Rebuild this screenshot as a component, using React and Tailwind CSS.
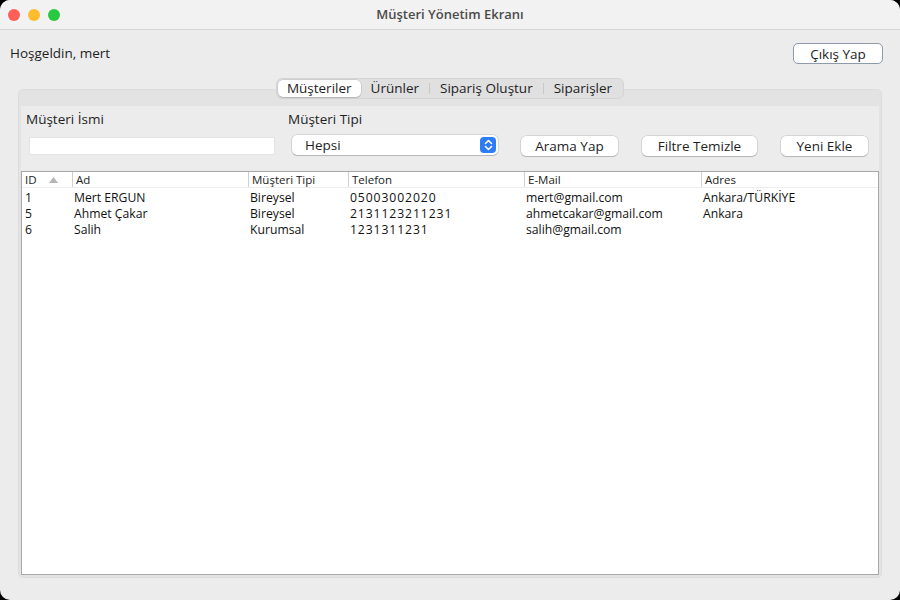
const font = { fontFamily: '"Open Sans", "Noto Sans", sans-serif' };

const columns = [
  { key: "id", label: "ID", w: "w-[50px]" },
  { key: "ad", label: "Ad", w: "w-[176px]" },
  { key: "tip", label: "Müşteri Tipi", w: "w-[100px]" },
  { key: "tel", label: "Telefon", w: "w-[176px]" },
  { key: "mail", label: "E-Mail", w: "w-[177px]" },
  { key: "adres", label: "Adres", w: "flex-1" },
];

const rows = [
  { id: "1", ad: "Mert ERGUN", tip: "Bireysel", tel: "05003002020", mail: "mert@gmail.com", adres: "Ankara/TÜRKİYE" },
  { id: "5", ad: "Ahmet Çakar", tip: "Bireysel", tel: "2131123211231", mail: "ahmetcakar@gmail.com", adres: "Ankara" },
  { id: "6", ad: "Salih", tip: "Kurumsal", tel: "1231311231", mail: "salih@gmail.com", adres: "" },
];

const tabs = ["Müşteriler", "Ürünler", "Sipariş Oluştur", "Siparişler"];

const AquaButton = ({ children, className }) => (
  <button
    className={`h-[20px] rounded-[5px] bg-white text-[13.5px] text-[#1e1e1e] shadow-[0_0_0_0.5px_rgba(0,0,0,0.18),0_1px_1px_rgba(0,0,0,0.15)] ${className}`}
  >
    {children}
  </button>
);

const App = () => {
  return (
    <div className="w-[900px] h-[600px] bg-black" style={font}>
      <div className="w-full h-full rounded-[10px] overflow-hidden bg-[#ececec] flex flex-col">
        {/* title bar */}
        <div className="h-[30px] shrink-0 bg-[#f2f2f2] border-b border-[#d6d6d6] flex items-center relative">
          <div className="flex gap-[8px] pl-[8px]">
            <span className="w-[12px] h-[12px] rounded-full bg-[#fe5f57]" />
            <span className="w-[12px] h-[12px] rounded-full bg-[#febc2e]" />
            <span className="w-[12px] h-[12px] rounded-full bg-[#28c840]" />
          </div>
          <div className="absolute inset-0 flex items-center justify-center text-[13px] font-semibold text-[#4b4b4b]">
            Müşteri Yönetim Ekranı
          </div>
        </div>

        {/* welcome row */}
        <div className="flex items-center justify-between pl-[10px] pr-[17px] h-[46px] shrink-0">
          <span className="text-[13.5px] text-[#1e1e1e]">Hoşgeldin, mert</span>
          <button className="w-[90px] h-[21px] rounded-[5px] bg-white border border-[#8e9bad] text-[13.5px] text-[#1e1e1e]">
            Çıkış Yap
          </button>
        </div>

        {/* tab pane */}
        <div className="relative mx-[18px] mt-[13px] h-[489px] rounded-[5px] bg-[#e3e3e3] border border-[#dcdcdc] flex flex-col">
          <div className="absolute -top-[12px] left-0 right-0 flex justify-center">
            <div className="flex items-center h-[21px] rounded-[6px] bg-[#e0e0e0] border border-[#d4d4d4] p-[1px]">
              {tabs.map((t, i) => (
                <div key={t} className="flex items-center h-full">
                  {i > 1 && <span className="w-px h-[11px] bg-[#c8c8c8]" />}
                  <div
                    className={`h-full flex items-center text-[13.5px] text-[#1e1e1e] rounded-[5px] ${
                      i === 0
                        ? "px-[9px] bg-white shadow-[0_0_0_0.5px_rgba(0,0,0,0.15),0_1px_1px_rgba(0,0,0,0.12)]"
                        : "px-[10px]"
                    }`}
                  >
                    {t}
                  </div>
                </div>
              ))}
            </div>
          </div>

          <div className="mt-[16px] mx-[2px] mb-[2px] flex-1 bg-[#ececec] flex flex-col">
            {/* filters */}
            <div className="flex pl-[5px] pt-[4px] h-[65px] shrink-0">
              <div className="w-[262px] flex flex-col">
                <span className="text-[13.5px] text-[#1e1e1e] leading-[18px]">Müşteri İsmi</span>
                <div className="mt-[9px] ml-[3px] w-[246px] h-[18px] bg-white border border-[#e4e4e4]" />
              </div>
              <div className="flex flex-col">
                <span className="text-[13.5px] text-[#1e1e1e] leading-[18px]">Müşteri Tipi</span>
                <div className="mt-[7px] flex items-start">
                  <div className="ml-[4px] w-[206px] h-[20px] rounded-[5px] bg-white shadow-[0_0_0_0.5px_rgba(0,0,0,0.18),0_1px_1px_rgba(0,0,0,0.15)] flex items-center justify-between pl-[13px] pr-[2px]">
                    <span className="text-[13.5px] text-[#1e1e1e]">Hepsi</span>
                    <span className="w-[16px] h-[16px] rounded-[4px] bg-[#2d7cf6] flex items-center justify-center">
                      <svg width="9" height="12" viewBox="0 0 9 12" fill="none" stroke="white" strokeWidth="1.6" strokeLinecap="round" strokeLinejoin="round">
                        <path d="M1.5 4.5 L4.5 1.5 L7.5 4.5" />
                        <path d="M1.5 7.5 L4.5 10.5 L7.5 7.5" />
                      </svg>
                    </span>
                  </div>
                  <AquaButton className="w-[97px] mt-px ml-[23px]">Arama Yap</AquaButton>
                  <AquaButton className="w-[115px] mt-px ml-[24px]">Filtre Temizle</AquaButton>
                  <AquaButton className="w-[87px] mt-px ml-[24px]">Yeni Ekle</AquaButton>
                </div>
              </div>
            </div>

            {/* table */}
            <div className="flex-1 bg-white border border-[#a8a8a8] flex flex-col">
              <div className="flex h-[16px] shrink-0 border-b border-[#eeeeee] text-[11.5px] text-[#222] leading-[16px]">
                {columns.map((c, i) => (
                  <div
                    key={c.key}
                    className={`${c.w} flex items-center pl-[3px] ${i > 0 ? "border-l border-[#d0d0d0]" : ""}`}
                  >
                    {c.label}
                    {i === 0 && (
                      <svg className="ml-[12px]" width="9" height="6" viewBox="0 0 9 6">
                        <path d="M0 6 L4.5 0 L9 6 Z" fill="#b5b5b5" />
                      </svg>
                    )}
                  </div>
                ))}
              </div>
              <div className="pt-[2px]">
                {rows.map((r) => (
                  <div key={r.id} className="flex h-[16px] text-[12.2px] text-[#111] leading-[16px]">
                    {columns.map((c, i) => (
                      <div
                        key={c.key}
                        className={`${c.w} ${i > 0 ? "pl-[2px]" : "pl-[3px]"} ${
                          c.key === "tel" ? "tracking-[0.9px]" : ""
                        } whitespace-nowrap`}
                      >
                        {r[c.key]}
                      </div>
                    ))}
                  </div>
                ))}
              </div>
            </div>
          </div>
        </div>
      </div>
    </div>
  );
};

export default App;
